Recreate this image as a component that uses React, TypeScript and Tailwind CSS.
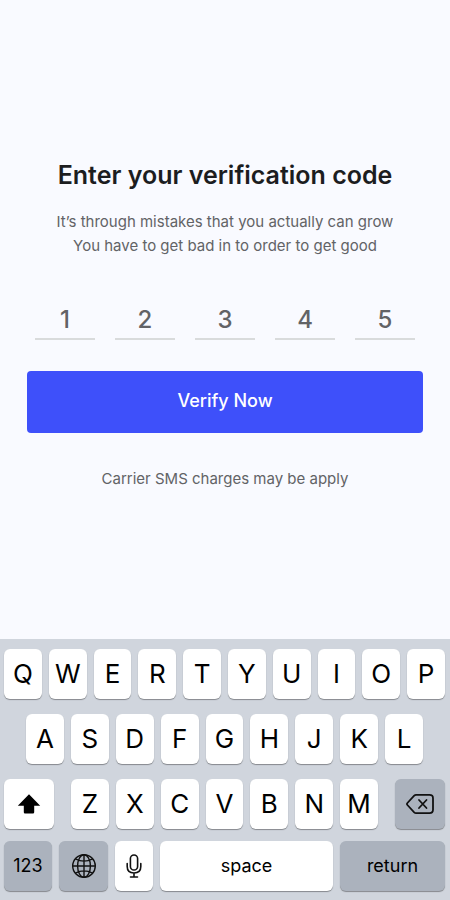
import { useState } from "react";
import type { ReactNode } from "react";

const CODE_LENGTH = 5;

type KeyProps = {
  children: ReactNode;
  label?: string;
  className?: string;
  onPress?: () => void;
};

function Key({ children, label, className = "", onPress }: KeyProps) {
  return (
    <button
      type="button"
      aria-label={label}
      onClick={onPress}
      className={`flex h-[50px] min-w-0 items-center justify-center rounded-md text-black shadow-[0_1px_1px_#85888d] ${className}`}
    >
      {children}
    </button>
  );
}

function LetterKey({ letter }: { letter: string }) {
  return <Key className="flex-1 bg-white text-[26px] leading-8">{letter}</Key>;
}

function ShiftIcon() {
  return (
    <svg width="24" height="20" viewBox="0 0 24 20" aria-hidden="true">
      <path d="M12 0.2 23.2 11.8H17.2V18.3Q17.2 19.5 16 19.5H8Q6.8 19.5 6.8 18.3V11.8H0.8Z" fill="#000" />
    </svg>
  );
}

function BackspaceIcon() {
  return (
    <svg width="28" height="20" viewBox="0 0 28 20" fill="none" stroke="#111" strokeWidth="1.8" strokeLinecap="round" strokeLinejoin="round" aria-hidden="true">
      <path d="M10 0.9H23.5Q27 0.9 27 4.2V15.8Q27 19.1 23.5 19.1H10Q9 19.1 8.2 18.3L1.4 11Q0.5 10 1.4 9L8.2 1.7Q9 0.9 10 0.9Z" />
      <path d="M13 6 20.5 14M20.5 6 13 14" />
    </svg>
  );
}

function GlobeIcon() {
  return (
    <svg width="26" height="26" viewBox="0 0 26 26" fill="none" stroke="#111" strokeWidth="1.4" aria-hidden="true">
      <circle cx="13" cy="13" r="11.3" />
      <ellipse cx="13" cy="13" rx="6.4" ry="11.3" />
      <path d="M13 1.7V24.3M1.7 13H24.3M4.4 5.8Q13 10.4 21.6 5.8M4.4 20.2Q13 15.6 21.6 20.2" />
    </svg>
  );
}

function MicIcon() {
  return (
    <svg width="16" height="24" viewBox="0 0 16 24" fill="none" stroke="#111" strokeWidth="1.6" strokeLinecap="round" aria-hidden="true">
      <rect x="4.4" y="1" width="7.2" height="15" rx="3.6" />
      <path d="M1.2 9.5V12.5Q1.2 19 8 19T14.8 12.5V9.5M8 19V23M4.5 23H11.5" />
    </svg>
  );
}

function Keyboard() {
  return (
    <section
      aria-label="Keyboard"
      className="flex flex-col bg-[#d0d5dd] pt-[10px] pr-[5px] pb-[9px] pl-1 font-['Inter','Liberation_Sans',sans-serif]"
    >
      <div className="flex gap-[7px]">
        {"QWERTYUIOP".split("").map((l) => (
          <LetterKey key={l} letter={l} />
        ))}
      </div>
      <div className="mt-[15px] flex gap-[7px] px-[22px]">
        {"ASDFGHJKL".split("").map((l) => (
          <LetterKey key={l} letter={l} />
        ))}
      </div>
      <div className="mt-[15px] flex gap-[17px]">
        <Key label="Shift" className="w-[50px] bg-white">
          <ShiftIcon />
        </Key>
        <div className="flex flex-1 gap-[7px]">
          {"ZXCVBNM".split("").map((l) => (
            <LetterKey key={l} letter={l} />
          ))}
        </div>
        <Key label="Delete" className="w-[50px] bg-[#abb2bd]">
          <BackspaceIcon />
        </Key>
      </div>
      <div className="mt-3 flex gap-[7px] text-lg">
        <Key className="w-12 bg-[#abb2bd]">123</Key>
        <Key label="Next keyboard" className="w-[49px] bg-[#abb2bd]">
          <GlobeIcon />
        </Key>
        <Key label="Dictation" className="w-[38px] bg-white">
          <MicIcon />
        </Key>
        <Key className="flex-1 bg-white">space</Key>
        <Key className="w-[105px] bg-[#abb2bd]">return</Key>
      </div>
    </section>
  );
}

export default function App() {
  const [code, setCode] = useState(["1", "2", "3", "4", "5"]);

  const setDigit = (index: number, value: string) =>
    setCode((prev) => prev.map((d, i) => (i === index ? value.slice(-1) : d)));

  return (
    <div className="flex min-h-screen flex-col bg-[#f9faff] font-['Inter','Liberation_Sans',sans-serif]">
      <main className="flex-1 px-[27px] pt-[159px] pb-8 text-center text-[#626366]">
        <h1 className="text-[25px] leading-8 font-semibold text-[#1c1d1f]">Enter your verification code</h1>
        <p className="mt-[19px] text-[15px] leading-6">
          It’s through mistakes that you actually can grow
          <br />
          You have to get bad in to order to get good
        </p>
        <form onSubmit={(e) => e.preventDefault()}>
          <div className="mt-[42px] grid grid-cols-5 gap-5 px-2">
            {Array.from({ length: CODE_LENGTH }, (_, i) => (
              <input
                key={i}
                type="text"
                inputMode="numeric"
                aria-label={`Digit ${i + 1}`}
                value={code[i]}
                onChange={(e) => setDigit(i, e.target.value)}
                className="h-10 w-full rounded-none border-b-2 border-[#d9dbdc] bg-transparent text-center text-2xl font-medium text-[#626366] outline-none"
              />
            ))}
          </div>
          <button
            type="submit"
            className="mt-[31px] h-[62px] w-full rounded bg-[#3e50fa] pb-0.5 text-lg font-medium text-white"
          >
            Verify Now
          </button>
        </form>
        <p className="mt-[34px] text-[15px] leading-6">Carrier SMS charges may be apply</p>
      </main>
      <Keyboard />
    </div>
  );
}
